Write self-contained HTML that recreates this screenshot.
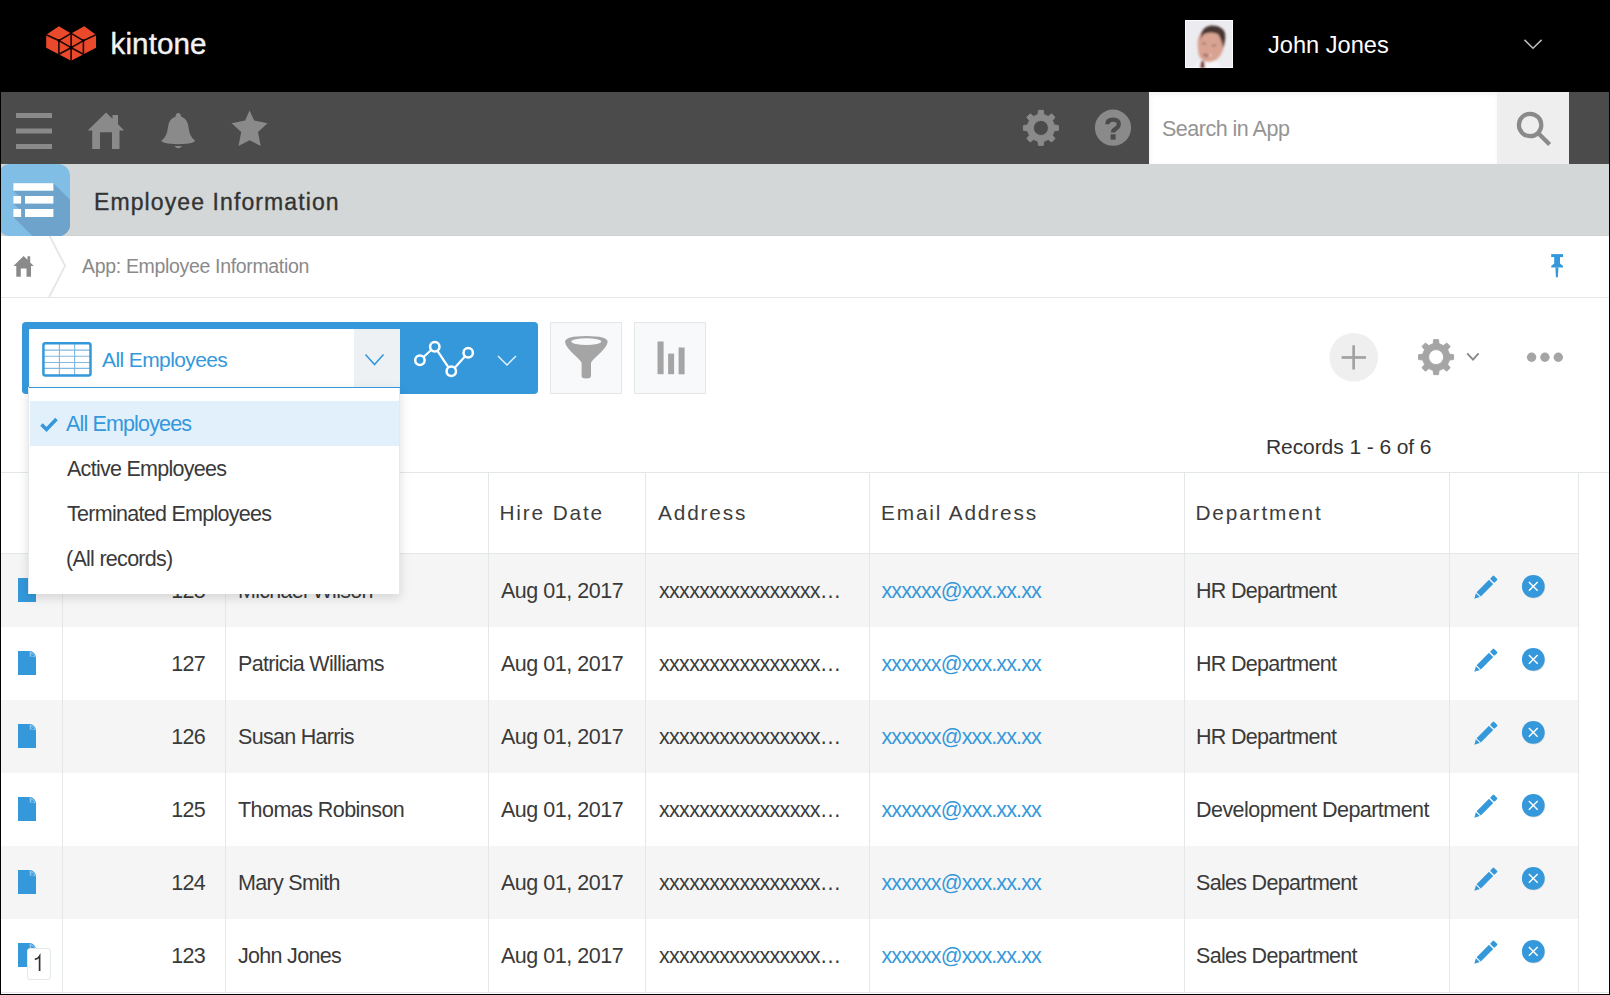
<!DOCTYPE html>
<html><head><meta charset="utf-8">
<style>
*{box-sizing:border-box;margin:0;padding:0}
html,body{width:1610px;height:995px;overflow:hidden;background:#fff}
body{position:relative;font-family:"Liberation Sans",sans-serif;color:#333}
.a{position:absolute}
.t{position:absolute;white-space:nowrap;line-height:1}
#hdr{left:0;top:0;width:1610px;height:92px;background:#000}
#tb{left:0;top:92px;width:1610px;height:72px;background:#4b4b4b}
#ab{left:0;top:164px;width:1610px;height:72px;background:#d4d7d7;border-bottom:1px solid #ced2d2}
#bc{left:0;top:236px;width:1610px;height:62px;background:#fff;border-bottom:1px solid #e3e7e8}
.th{font-size:20.8px;letter-spacing:1.85px;color:#3d3d3d}
.td{font-size:21.5px;letter-spacing:-0.7px;color:#3a3a3a}
.dd{font-size:21.5px;letter-spacing:-0.72px;color:#3a3a3a}
.frame-l{left:0;top:0;width:1px;height:995px;background:#000;z-index:50}
.frame-r{left:1609px;top:0;width:1px;height:995px;background:#000;z-index:50}
.frame-b{left:0;top:994px;width:1610px;height:1px;background:#000;z-index:50}
</style></head><body>

<!-- header -->
<div id="hdr" class="a">
  <svg class="a" style="left:0;top:0" width="220" height="92" viewBox="0 0 220 92">
    <polygon points="58.9,26.2 71.1,33.4 84.2,26.2 96,34.7 96,47.7 71.1,60.8 46.2,47.7 46.2,34.7" fill="#ea4a2b"/>
    <g stroke="#1a0604" stroke-width="1.6" fill="none" stroke-linecap="round">
      <polyline points="46.2,34.7 58.9,40.6 71.1,33.4 83.4,40.6 96,34.7"/>
      <line x1="58.9" y1="40.6" x2="58.9" y2="54.2"/>
      <line x1="83.4" y1="40.6" x2="83.4" y2="54.2"/>
      <line x1="71.1" y1="33.4" x2="71.1" y2="60.8"/>
      <polyline points="58.9,40.6 71.1,47.7 83.4,40.6"/>
      <polyline points="58.9,54.2 71.1,47.7 83.4,54.2"/>
    </g>
    <g fill="#000"><circle cx="71.1" cy="47.7" r="1.7"/><circle cx="58.9" cy="40.6" r="1.3"/><circle cx="83.4" cy="40.6" r="1.3"/></g>
  </svg>
  <div class="t" style="left:110.5px;top:28.5px;font-size:29.6px;color:#f2f2f2;-webkit-text-stroke:0.4px #f2f2f2;letter-spacing:0.1px">kintone</div>
  <svg class="a" style="left:1185px;top:20px" width="48" height="48" viewBox="1185 20 48 48">
    <defs><filter id="bl" x="-20%" y="-20%" width="140%" height="140%"><feGaussianBlur stdDeviation="0.9"/></filter></defs>
    <rect x="1185" y="20" width="48" height="48" fill="#fbfbfd"/>
    <rect x="1186" y="21" width="46" height="46" fill="#ecebf0"/>
    <g filter="url(#bl)">
      <path d="M1194,68 Q1197,59 1206,58 Q1216,58 1222,68 Z" fill="#f6f4f6"/>
      <path d="M1198,50 Q1196,38 1202,31 Q1210,25 1219,29 Q1226,34 1224,46 Q1222,57 1214,61 Q1206,64 1201,59 Q1198,55 1198,50 Z" fill="#d9a392"/>
      <path d="M1201,37 Q1201,27 1211,25.5 Q1222,25 1225,33 Q1226,40 1223,48 Q1222,40 1218,34 Q1211,31 1204,34 Q1201,37 1200,42 Z" fill="#463630"/>
      <path d="M1203,55 Q1207,58 1211,55" fill="none" stroke="#f2e4e0" stroke-width="1.6"/>
      <ellipse cx="1206" cy="55.5" rx="3.5" ry="1.8" transform="rotate(12 1206 55.5)" fill="#9a5852" opacity="0.7"/>
      <ellipse cx="1204" cy="43.5" rx="2.2" ry="1.1" fill="#9b7466"/>
      <ellipse cx="1214" cy="45.5" rx="2.2" ry="1.1" fill="#9b7466"/>
      <path d="M1201,61 L1204,61 L1205,68 L1200,68 Z" fill="#7d3a32"/>
    </g>
  </svg>
    <svg class="a" style="left:1515px;top:30px" width="35" height="25" viewBox="1515 30 35 25"><polyline points="1524.5,39.9 1533,48.2 1541.6,39.9" fill="none" stroke="#bdbdbd" stroke-width="1.5"/></svg>
  <div class="t" style="left:1268px;top:34px;font-size:23.6px;color:#fff">John Jones</div>
</div>

<!-- toolbar -->
<div id="tb" class="a">
  <svg class="a" style="left:0;top:0" width="300" height="72" viewBox="0 92 300 72">
    <g fill="#8a8a8a">
      <rect x="16" y="113" width="36" height="5"/>
      <rect x="16" y="128.5" width="36" height="5"/>
      <rect x="16" y="144" width="36" height="5"/>
      <polygon points="106,112.4 112.5,118.8 112.5,115 118,115 118,124.3 124.2,130.6 119.5,130.6 119.5,149 112,149 112,132.3 100,132.3 100,149 92.2,149 92.2,130.6 87.7,130.6"/>
      <path d="M175.6,116.5 Q175.6,113 178.3,113 Q181,113 181,116.5 Q187.5,118.5 188.5,127 Q189.5,137 194.9,140.5 Q195.5,143.5 178.3,144.3 Q161,143.5 161.5,140.5 Q167,137 168,127 Q169,118.5 175.6,116.5 Z"/>
      <path d="M174.4,146 L182.1,146 Q178.3,150.5 174.4,146 Z"/>
      <polygon points="249.6,110.6 254.1,120.5 267.6,123.3 258,131.9 260.7,146 249.6,140.2 238.5,146 241.2,131.9 231.6,123.3 245.1,120.5"/>
    </g>
  </svg>
  <svg class="a" style="left:1000px;top:0" width="150" height="72" viewBox="1000 92 150 72">
    <g fill="#8a8a8a">
      <path fill-rule="evenodd" fill="#8a8a8a" stroke="#8a8a8a" stroke-width="0.9" stroke-linejoin="round" d="M1037.90,114.64 L1038.50,110.36 L1043.30,110.36 L1043.90,114.64 A13.60,13.60 0 0,1 1048.16,116.40 L1048.16,116.40 L1051.60,113.80 L1055.00,117.20 L1052.40,120.64 A13.60,13.60 0 0,1 1054.16,124.90 L1054.16,124.90 L1058.44,125.50 L1058.44,130.30 L1054.16,130.90 A13.60,13.60 0 0,1 1052.40,135.16 L1052.40,135.16 L1055.00,138.60 L1051.60,142.00 L1048.16,139.40 A13.60,13.60 0 0,1 1043.90,141.16 L1043.90,141.16 L1043.30,145.44 L1038.50,145.44 L1037.90,141.16 A13.60,13.60 0 0,1 1033.64,139.40 L1033.64,139.40 L1030.20,142.00 L1026.80,138.60 L1029.40,135.16 A13.60,13.60 0 0,1 1027.64,130.90 L1027.64,130.90 L1023.36,130.30 L1023.36,125.50 L1027.64,124.90 A13.60,13.60 0 0,1 1029.40,120.64 L1029.40,120.64 L1026.80,117.20 L1030.20,113.80 L1033.64,116.40 A13.60,13.60 0 0,1 1037.90,114.64 Z M1033.40,127.90 a7.50,7.50 0 1,0 15.00,0 a7.50,7.50 0 1,0 -15.00,0 Z"/>
      <circle cx="1113" cy="127.7" r="18.1"/>
    </g>
    <path d="M1107.3,124.2 Q1107.3,119.6 1113,119.6 Q1118.8,119.6 1118.8,124 Q1118.8,127 1115.6,128.8 Q1113,130.2 1113,132.5" fill="none" stroke="#4b4b4b" stroke-width="4.2"/><rect x="1110.6" y="134.3" width="5" height="5.3" fill="#4b4b4b"/>
  </svg>
  <div class="a" style="left:1149px;top:0;width:348px;height:72px;background:#fff;box-shadow:inset 1px 2px 5px rgba(0,0,0,0.06)"></div>
  <div class="t" style="left:1162px;top:27px;font-size:21.5px;letter-spacing:-0.5px;color:#949494">Search in App</div>
  <div class="a" style="left:1497px;top:0;width:72px;height:72px;background:#eeeeee"></div>
  <svg class="a" style="left:1497px;top:0" width="72" height="72" viewBox="1497 92 72 72">
    <circle cx="1530.1" cy="125" r="11.2" fill="none" stroke="#8a8a8a" stroke-width="4.2"/>
    <line x1="1538.3" y1="133.2" x2="1549.6" y2="144.5" stroke="#8a8a8a" stroke-width="4.3"/>
  </svg>
</div>

<!-- app bar -->
<div id="ab" class="a">
  <svg class="a" style="left:0;top:0" width="72" height="72" viewBox="0 164 72 72">
    <defs><clipPath id="icl"><rect x="-2" y="164" width="72" height="72" rx="12"/></clipPath></defs>
    <g clip-path="url(#icl)">
      <rect x="-2" y="164" width="72" height="72" fill="#80bee6"/>
      <polygon points="13.4,190.7 53.4,183.2 143.4,273.2 103.4,280.7" fill="#6ea3cb"/><polygon points="13.4,203.6 21.1,196.0 111.1,286.0 103.4,293.6" fill="#6ea3cb"/><polygon points="25.0,203.6 53.4,196.0 143.4,286.0 115.0,293.6" fill="#6ea3cb"/><polygon points="13.4,217.0 21.1,209.0 111.1,299.0 103.4,307.0" fill="#6ea3cb"/><polygon points="25.0,217.0 53.4,209.0 143.4,299.0 115.0,307.0" fill="#6ea3cb"/>
    </g>
    <g fill="#fff">
      <rect x="13.4" y="183.2" width="40" height="7.5"/>
      <rect x="13.4" y="196" width="7.7" height="7.6"/>
      <rect x="25" y="196" width="28.4" height="7.6"/>
      <rect x="13.4" y="209" width="7.7" height="8"/>
      <rect x="25" y="209" width="28.4" height="8"/>
    </g>
  </svg>
  <div class="t" style="left:94px;top:27px;font-size:23px;color:#333;-webkit-text-stroke:0.35px #333;letter-spacing:1.1px">Employee Information</div>
</div>

<!-- breadcrumb -->
<div id="bc" class="a">
  <svg class="a" style="left:0;top:0" width="80" height="62" viewBox="0 236 80 62">
    <polygon points="23.6,256 27.5,259.8 27.5,256.3 30.2,256.3 30.2,262.5 33.8,266 31,266 31,276.7 26.5,276.7 26.5,268.5 20.8,268.5 20.8,276.7 16.3,276.7 16.3,266 13.4,266" fill="#8a8a8a"/>
    <polyline points="49.2,235 65,265.8 49.2,297" fill="none" stroke="#e2e6e8" stroke-width="1.8"/>
  </svg>
  <div class="t" style="left:82px;top:21px;font-size:19.5px;letter-spacing:-0.33px;color:#8a8a8a">App: Employee Information</div>
  <svg class="a" style="left:1540px;top:0" width="30" height="62" viewBox="1540 236 30 62">
    <g fill="#3498db">
      <rect x="1551.2" y="254.1" width="11.8" height="3"/>
      <rect x="1554.2" y="256.5" width="5.8" height="8"/>
      <polygon points="1554.2,263.5 1560,263.5 1563,266 1563,267.6 1551.2,267.6 1551.2,266"/>
      <polygon points="1555.4,267.5 1558.4,267.5 1557.9,277.3 1555.9,277.3"/>
    </g>
  </svg>
</div>

<!-- view toolbar -->
<div class="a" style="left:22px;top:322px;width:516px;height:71.5px;background:#3498db;border-radius:4px"></div>
<div class="a" style="left:29px;top:329px;width:370.5px;height:58px;background:#fff;border-radius:1px"></div>
<div class="a" style="left:354px;top:329px;width:45.5px;height:58px;background:#eef1f3"></div>
<svg class="a" style="left:360px;top:348px" width="30" height="24" viewBox="360 348 30 24">
  <polyline points="365.5,354.5 374.5,364.5 383.5,354.5" fill="none" stroke="#3498db" stroke-width="1.6"/>
</svg>
<svg class="a" style="left:36px;top:336px" width="64" height="46" viewBox="36 336 64 46">
  <g stroke="#80b8e0" stroke-width="1.1">
    <line x1="43" y1="350.1" x2="91" y2="350.1"/>
    <line x1="43" y1="356.2" x2="91" y2="356.2"/>
    <line x1="43" y1="362.5" x2="91" y2="362.5"/>
    <line x1="43" y1="368.4" x2="91" y2="368.4"/>
    <line x1="59.4" y1="343" x2="59.4" y2="376"/>
    <line x1="74.6" y1="343" x2="74.6" y2="376"/>
  </g>
  <rect x="43.4" y="343.2" width="47.1" height="32.3" rx="2" fill="none" stroke="#3498db" stroke-width="2.5"/>
</svg>
<div class="t" style="left:102px;top:349px;font-size:21px;letter-spacing:-0.6px;color:#3498db">All Employees</div>
<svg class="a" style="left:400px;top:322px" width="138" height="72" viewBox="400 322 138 72">
  <g stroke="#fff" stroke-width="2.2" fill="none">
    <polyline points="419.9,360.3 434.8,346.8 451.3,371.7 468.2,352.8"/>
  </g>
  <g stroke="#fff" stroke-width="2.5" fill="#3498db">
    <circle cx="419.9" cy="360.3" r="4.7"/>
    <circle cx="434.8" cy="346.8" r="4.7"/>
    <circle cx="451.3" cy="371.3" r="4.7"/>
    <circle cx="468.2" cy="352.8" r="4.7"/>
  </g>
  <polyline points="498,356 507,365 516,356" fill="none" stroke="#eaf4fb" stroke-width="1.4"/>
</svg>
<div class="a" style="left:550px;top:322px;width:72px;height:71.5px;background:#f7f9fa;border:1px solid #e3e7e8"></div>
<div class="a" style="left:634px;top:322px;width:72px;height:71.5px;background:#f7f9fa;border:1px solid #e3e7e8"></div>
<svg class="a" style="left:550px;top:322px" width="72" height="72" viewBox="550 322 72 72">
  <path d="M565,342 Q565,336 586.3,336 Q607.7,336 607.7,342 Q607,347 597,356 Q591.5,361 591,363 L591,376 Q591,378.5 586.3,378.5 Q581.6,378.5 581.6,376 L581.6,363 Q581,361 575.6,356 Q565.6,347 565,342 Z" fill="#a5a5a5"/>
  <ellipse cx="586.3" cy="341.6" rx="15" ry="3.4" fill="#f7f9fa"/>
</svg>
<svg class="a" style="left:634px;top:322px" width="72" height="72" viewBox="634 322 72 72">
  <g fill="#a5a5a5">
    <rect x="657.5" y="341.5" width="6.1" height="32.7"/>
    <rect x="668.1" y="353.6" width="6" height="20.6"/>
    <rect x="678.6" y="347.5" width="6" height="26.8"/>
  </g>
</svg>
<!-- right icons -->
<svg class="a" style="left:1320px;top:325px" width="260" height="70" viewBox="1320 325 260 70">
  <circle cx="1353.7" cy="357.2" r="24.3" fill="#efefef"/>
  <rect x="1341.6" y="356.1" width="24.4" height="2.7" fill="#a2a2a2"/>
  <rect x="1352.3" y="345.3" width="2.7" height="24.2" fill="#a2a2a2"/>
  <path fill-rule="evenodd" fill="#a5a5a5" stroke="#a5a5a5" stroke-width="0.9" stroke-linejoin="round" d="M1433.10,343.84 L1433.70,339.56 L1438.50,339.56 L1439.10,343.84 A13.60,13.60 0 0,1 1443.36,345.60 L1443.36,345.60 L1446.80,343.00 L1450.20,346.40 L1447.60,349.84 A13.60,13.60 0 0,1 1449.36,354.10 L1449.36,354.10 L1453.64,354.70 L1453.64,359.50 L1449.36,360.10 A13.60,13.60 0 0,1 1447.60,364.36 L1447.60,364.36 L1450.20,367.80 L1446.80,371.20 L1443.36,368.60 A13.60,13.60 0 0,1 1439.10,370.36 L1439.10,370.36 L1438.50,374.64 L1433.70,374.64 L1433.10,370.36 A13.60,13.60 0 0,1 1428.84,368.60 L1428.84,368.60 L1425.40,371.20 L1422.00,367.80 L1424.60,364.36 A13.60,13.60 0 0,1 1422.84,360.10 L1422.84,360.10 L1418.56,359.50 L1418.56,354.70 L1422.84,354.10 A13.60,13.60 0 0,1 1424.60,349.84 L1424.60,349.84 L1422.00,346.40 L1425.40,343.00 L1428.84,345.60 A13.60,13.60 0 0,1 1433.10,343.84 Z M1428.60,357.10 a7.50,7.50 0 1,0 15.00,0 a7.50,7.50 0 1,0 -15.00,0 Z"/>
  <polyline points="1467.2,353.4 1473,359.6 1478.6,353.4" fill="none" stroke="#888" stroke-width="1.9"/>
  <g fill="#a5a5a5">
    <circle cx="1531.6" cy="357.3" r="4.7"/>
    <circle cx="1544.9" cy="357.3" r="4.7"/>
    <circle cx="1558.3" cy="357.3" r="4.7"/>
  </g>
</svg>
<div class="t" style="left:1266px;top:436px;font-size:21px;letter-spacing:-0.08px;color:#333">Records 1 - 6 of 6</div>

<!-- table -->
<div class="a" style="left:1px;top:472px;width:1608px;height:1px;background:#e3e7e8"></div>
<div class="a" style="left:1px;top:553px;width:1577px;height:1px;background:#e3e7e8"></div>
<div class="a" style="left:1px;top:554px;width:1577px;height:73px;background:#f5f5f5"></div>
<div class="a" style="left:1px;top:627px;width:1577px;height:73px;background:#fff"></div>
<div class="a" style="left:1px;top:700px;width:1577px;height:73px;background:#f5f5f5"></div>
<div class="a" style="left:1px;top:773px;width:1577px;height:73px;background:#fff"></div>
<div class="a" style="left:1px;top:846px;width:1577px;height:73px;background:#f5f5f5"></div>
<div class="a" style="left:1px;top:919px;width:1577px;height:73px;background:#fff"></div>
<div class="a" style="left:1px;top:992px;width:1608px;height:1px;background:#e3e7e8"></div>
<div class="a" style="left:62px;top:472px;width:1px;height:520px;background:#e3e7e8"></div>
<div class="a" style="left:225px;top:472px;width:1px;height:520px;background:#e3e7e8"></div>
<div class="a" style="left:488px;top:472px;width:1px;height:520px;background:#e3e7e8"></div>
<div class="a" style="left:645px;top:472px;width:1px;height:520px;background:#e3e7e8"></div>
<div class="a" style="left:869px;top:472px;width:1px;height:520px;background:#e3e7e8"></div>
<div class="a" style="left:1184px;top:472px;width:1px;height:520px;background:#e3e7e8"></div>
<div class="a" style="left:1449px;top:472px;width:1px;height:520px;background:#e3e7e8"></div>
<div class="a" style="left:1578px;top:472px;width:1px;height:520px;background:#e3e7e8"></div>
<div class="t th" style="left:499.5px;top:503px">Hire Date</div>
<div class="t th" style="left:658px;top:503px">Address</div>
<div class="t th" style="left:881px;top:503px">Email Address</div>
<div class="t th" style="left:1195.5px;top:503px">Department</div>
<svg class="a" style="left:18px;top:577.5px" width="18" height="24" viewBox="0 0 18 24"><path d="M0,0 H11.5 C15,0.2 17.8,3 18,6.5 V24 H0 Z" fill="#3498db"/><path d="M11.2,0.8 C14.6,1.2 17.2,3.6 17.6,6.6 C16.2,5.6 14.2,5.4 11.6,5.6 C12,3.8 11.9,2.2 11.2,0.8 Z" fill="#8fc6ee"/><path d="M13.2,2.6 C14.8,3.2 15.8,4.2 16.2,5.2 C15,4.9 14,4.9 13.4,5 Z" fill="#3498db"/></svg>
<div class="t td" style="right:1405px;top:581px">128</div>
<div class="t td" style="left:238px;top:581px">Michael Wilson</div>
<div class="t td" style="left:501px;top:581px;letter-spacing:-0.48px">Aug 01, 2017</div>
<div class="t td" style="left:659px;top:581px">xxxxxxxxxxxxxxxx…</div>
<div class="t td" style="left:881.5px;top:581px;color:#3498db;letter-spacing:-0.88px">xxxxxx@xxx.xx.xx</div>
<div class="t td" style="left:1196px;top:581px">HR Department</div>
<svg class="a" style="left:1466px;top:568px" width="80" height="36" viewBox="1466 0 80 36">
<g transform="translate(1486,19) rotate(-45)"><polygon points="-16.5,0 -11.5,-2.8 -11.5,2.8" fill="#3498db"/><rect x="-10.3" y="-3" width="17.5" height="6" fill="#3498db"/><rect x="8.6" y="-3" width="5" height="6" rx="1" fill="#3498db"/></g>
<circle cx="1533.8" cy="19.3" r="11.3" fill="rgba(0,0,0,0.12)"/>
<circle cx="1533.3" cy="18.4" r="11.35" fill="#3498db"/>
<path d="M1528.9,14 L1537.7,22.8 M1537.7,14 L1528.9,22.8" stroke="#fff" stroke-width="1.45"/>
</svg>
<svg class="a" style="left:18px;top:650.5px" width="18" height="24" viewBox="0 0 18 24"><path d="M0,0 H11.5 C15,0.2 17.8,3 18,6.5 V24 H0 Z" fill="#3498db"/><path d="M11.2,0.8 C14.6,1.2 17.2,3.6 17.6,6.6 C16.2,5.6 14.2,5.4 11.6,5.6 C12,3.8 11.9,2.2 11.2,0.8 Z" fill="#8fc6ee"/><path d="M13.2,2.6 C14.8,3.2 15.8,4.2 16.2,5.2 C15,4.9 14,4.9 13.4,5 Z" fill="#3498db"/></svg>
<div class="t td" style="right:1405px;top:654px">127</div>
<div class="t td" style="left:238px;top:654px">Patricia Williams</div>
<div class="t td" style="left:501px;top:654px;letter-spacing:-0.48px">Aug 01, 2017</div>
<div class="t td" style="left:659px;top:654px">xxxxxxxxxxxxxxxx…</div>
<div class="t td" style="left:881.5px;top:654px;color:#3498db;letter-spacing:-0.88px">xxxxxx@xxx.xx.xx</div>
<div class="t td" style="left:1196px;top:654px">HR Department</div>
<svg class="a" style="left:1466px;top:641px" width="80" height="36" viewBox="1466 0 80 36">
<g transform="translate(1486,19) rotate(-45)"><polygon points="-16.5,0 -11.5,-2.8 -11.5,2.8" fill="#3498db"/><rect x="-10.3" y="-3" width="17.5" height="6" fill="#3498db"/><rect x="8.6" y="-3" width="5" height="6" rx="1" fill="#3498db"/></g>
<circle cx="1533.8" cy="19.3" r="11.3" fill="rgba(0,0,0,0.12)"/>
<circle cx="1533.3" cy="18.4" r="11.35" fill="#3498db"/>
<path d="M1528.9,14 L1537.7,22.8 M1537.7,14 L1528.9,22.8" stroke="#fff" stroke-width="1.45"/>
</svg>
<svg class="a" style="left:18px;top:723.5px" width="18" height="24" viewBox="0 0 18 24"><path d="M0,0 H11.5 C15,0.2 17.8,3 18,6.5 V24 H0 Z" fill="#3498db"/><path d="M11.2,0.8 C14.6,1.2 17.2,3.6 17.6,6.6 C16.2,5.6 14.2,5.4 11.6,5.6 C12,3.8 11.9,2.2 11.2,0.8 Z" fill="#8fc6ee"/><path d="M13.2,2.6 C14.8,3.2 15.8,4.2 16.2,5.2 C15,4.9 14,4.9 13.4,5 Z" fill="#3498db"/></svg>
<div class="t td" style="right:1405px;top:727px">126</div>
<div class="t td" style="left:238px;top:727px">Susan Harris</div>
<div class="t td" style="left:501px;top:727px;letter-spacing:-0.48px">Aug 01, 2017</div>
<div class="t td" style="left:659px;top:727px">xxxxxxxxxxxxxxxx…</div>
<div class="t td" style="left:881.5px;top:727px;color:#3498db;letter-spacing:-0.88px">xxxxxx@xxx.xx.xx</div>
<div class="t td" style="left:1196px;top:727px">HR Department</div>
<svg class="a" style="left:1466px;top:714px" width="80" height="36" viewBox="1466 0 80 36">
<g transform="translate(1486,19) rotate(-45)"><polygon points="-16.5,0 -11.5,-2.8 -11.5,2.8" fill="#3498db"/><rect x="-10.3" y="-3" width="17.5" height="6" fill="#3498db"/><rect x="8.6" y="-3" width="5" height="6" rx="1" fill="#3498db"/></g>
<circle cx="1533.8" cy="19.3" r="11.3" fill="rgba(0,0,0,0.12)"/>
<circle cx="1533.3" cy="18.4" r="11.35" fill="#3498db"/>
<path d="M1528.9,14 L1537.7,22.8 M1537.7,14 L1528.9,22.8" stroke="#fff" stroke-width="1.45"/>
</svg>
<svg class="a" style="left:18px;top:796.5px" width="18" height="24" viewBox="0 0 18 24"><path d="M0,0 H11.5 C15,0.2 17.8,3 18,6.5 V24 H0 Z" fill="#3498db"/><path d="M11.2,0.8 C14.6,1.2 17.2,3.6 17.6,6.6 C16.2,5.6 14.2,5.4 11.6,5.6 C12,3.8 11.9,2.2 11.2,0.8 Z" fill="#8fc6ee"/><path d="M13.2,2.6 C14.8,3.2 15.8,4.2 16.2,5.2 C15,4.9 14,4.9 13.4,5 Z" fill="#3498db"/></svg>
<div class="t td" style="right:1405px;top:800px">125</div>
<div class="t td" style="left:238px;top:800px;letter-spacing:-0.55px">Thomas Robinson</div>
<div class="t td" style="left:501px;top:800px;letter-spacing:-0.48px">Aug 01, 2017</div>
<div class="t td" style="left:659px;top:800px">xxxxxxxxxxxxxxxx…</div>
<div class="t td" style="left:881.5px;top:800px;color:#3498db;letter-spacing:-0.88px">xxxxxx@xxx.xx.xx</div>
<div class="t td" style="left:1196px;top:800px;letter-spacing:-0.55px">Development Department</div>
<svg class="a" style="left:1466px;top:787px" width="80" height="36" viewBox="1466 0 80 36">
<g transform="translate(1486,19) rotate(-45)"><polygon points="-16.5,0 -11.5,-2.8 -11.5,2.8" fill="#3498db"/><rect x="-10.3" y="-3" width="17.5" height="6" fill="#3498db"/><rect x="8.6" y="-3" width="5" height="6" rx="1" fill="#3498db"/></g>
<circle cx="1533.8" cy="19.3" r="11.3" fill="rgba(0,0,0,0.12)"/>
<circle cx="1533.3" cy="18.4" r="11.35" fill="#3498db"/>
<path d="M1528.9,14 L1537.7,22.8 M1537.7,14 L1528.9,22.8" stroke="#fff" stroke-width="1.45"/>
</svg>
<svg class="a" style="left:18px;top:869.5px" width="18" height="24" viewBox="0 0 18 24"><path d="M0,0 H11.5 C15,0.2 17.8,3 18,6.5 V24 H0 Z" fill="#3498db"/><path d="M11.2,0.8 C14.6,1.2 17.2,3.6 17.6,6.6 C16.2,5.6 14.2,5.4 11.6,5.6 C12,3.8 11.9,2.2 11.2,0.8 Z" fill="#8fc6ee"/><path d="M13.2,2.6 C14.8,3.2 15.8,4.2 16.2,5.2 C15,4.9 14,4.9 13.4,5 Z" fill="#3498db"/></svg>
<div class="t td" style="right:1405px;top:873px">124</div>
<div class="t td" style="left:238px;top:873px">Mary Smith</div>
<div class="t td" style="left:501px;top:873px;letter-spacing:-0.48px">Aug 01, 2017</div>
<div class="t td" style="left:659px;top:873px">xxxxxxxxxxxxxxxx…</div>
<div class="t td" style="left:881.5px;top:873px;color:#3498db;letter-spacing:-0.88px">xxxxxx@xxx.xx.xx</div>
<div class="t td" style="left:1196px;top:873px">Sales Department</div>
<svg class="a" style="left:1466px;top:860px" width="80" height="36" viewBox="1466 0 80 36">
<g transform="translate(1486,19) rotate(-45)"><polygon points="-16.5,0 -11.5,-2.8 -11.5,2.8" fill="#3498db"/><rect x="-10.3" y="-3" width="17.5" height="6" fill="#3498db"/><rect x="8.6" y="-3" width="5" height="6" rx="1" fill="#3498db"/></g>
<circle cx="1533.8" cy="19.3" r="11.3" fill="rgba(0,0,0,0.12)"/>
<circle cx="1533.3" cy="18.4" r="11.35" fill="#3498db"/>
<path d="M1528.9,14 L1537.7,22.8 M1537.7,14 L1528.9,22.8" stroke="#fff" stroke-width="1.45"/>
</svg>
<svg class="a" style="left:18px;top:942.5px" width="18" height="24" viewBox="0 0 18 24"><path d="M0,0 H11.5 C15,0.2 17.8,3 18,6.5 V24 H0 Z" fill="#3498db"/><path d="M11.2,0.8 C14.6,1.2 17.2,3.6 17.6,6.6 C16.2,5.6 14.2,5.4 11.6,5.6 C12,3.8 11.9,2.2 11.2,0.8 Z" fill="#8fc6ee"/><path d="M13.2,2.6 C14.8,3.2 15.8,4.2 16.2,5.2 C15,4.9 14,4.9 13.4,5 Z" fill="#3498db"/></svg>
<div class="t td" style="right:1405px;top:946px">123</div>
<div class="t td" style="left:238px;top:946px">John Jones</div>
<div class="t td" style="left:501px;top:946px;letter-spacing:-0.48px">Aug 01, 2017</div>
<div class="t td" style="left:659px;top:946px">xxxxxxxxxxxxxxxx…</div>
<div class="t td" style="left:881.5px;top:946px;color:#3498db;letter-spacing:-0.88px">xxxxxx@xxx.xx.xx</div>
<div class="t td" style="left:1196px;top:946px">Sales Department</div>
<svg class="a" style="left:1466px;top:933px" width="80" height="36" viewBox="1466 0 80 36">
<g transform="translate(1486,19) rotate(-45)"><polygon points="-16.5,0 -11.5,-2.8 -11.5,2.8" fill="#3498db"/><rect x="-10.3" y="-3" width="17.5" height="6" fill="#3498db"/><rect x="8.6" y="-3" width="5" height="6" rx="1" fill="#3498db"/></g>
<circle cx="1533.8" cy="19.3" r="11.3" fill="rgba(0,0,0,0.12)"/>
<circle cx="1533.3" cy="18.4" r="11.35" fill="#3498db"/>
<path d="M1528.9,14 L1537.7,22.8 M1537.7,14 L1528.9,22.8" stroke="#fff" stroke-width="1.45"/>
</svg>
<!-- /table -->
<!-- dropdown -->
<div class="a" style="left:28px;top:387px;width:371.5px;height:207px;background:#fff;border:1px solid #e6e9eb;border-top:none;border-bottom:none;box-shadow:0 4px 10px rgba(0,0,0,0.13);z-index:10">
  <div class="a" style="left:0;top:0;width:370.5px;height:1px;background:#3498db"></div>
  <div class="a" style="left:1px;top:14px;width:369px;height:45px;background:#e2f0fb"></div>
  <svg class="a" style="left:10px;top:29px" width="22" height="18" viewBox="39 416 22 18"><polyline points="41.5,424.5 46.5,429.5 56.5,419" fill="none" stroke="#3498db" stroke-width="3.6"/></svg>
  <div class="t dd" style="left:37px;top:27px;color:#3498db;letter-spacing:-0.85px">All Employees</div>
  <div class="t dd" style="left:38px;top:72px">Active Employees</div>
  <div class="t dd" style="left:38px;top:117px">Terminated Employees</div>
  <div class="t dd" style="left:37px;top:162px">(All records)</div>
</div>
<div class="a" style="left:27px;top:947.5px;width:23.5px;height:32px;background:#fff;border:1px solid #e3e7e8;border-radius:3px;z-index:5"></div>
<svg class="a" style="left:27px;top:947px;z-index:6" width="24" height="33" viewBox="27 947 24 33"><path d="M34.8,959.4 Q38,959 39.6,956.2 L39.6,971" fill="none" stroke="#333" stroke-width="1.7"/></svg>

<div class="a frame-l"></div>
<div class="a frame-r"></div>
<div class="a frame-b"></div>
</body></html>
